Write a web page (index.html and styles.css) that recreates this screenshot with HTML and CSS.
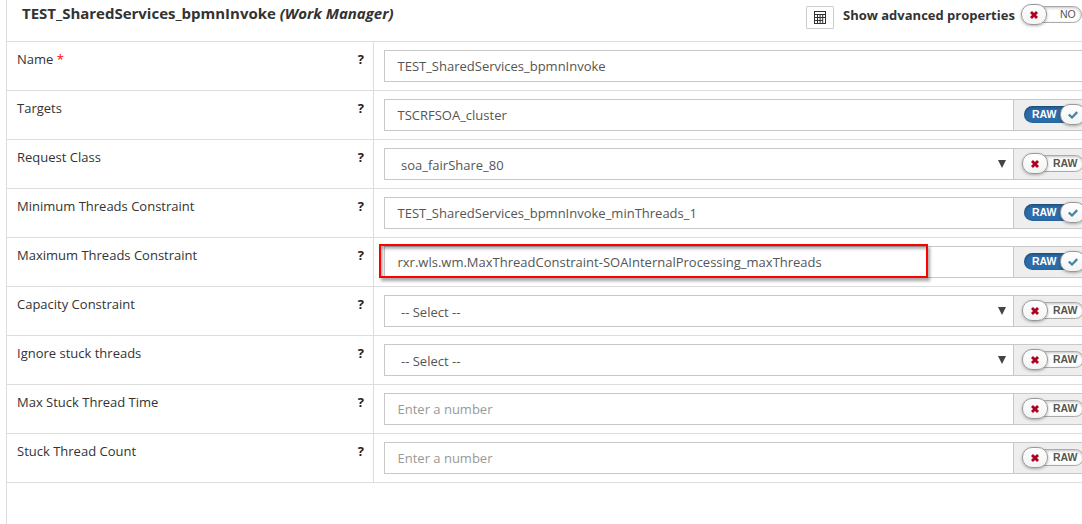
FILE: index.html
```
<!DOCTYPE html>
<html lang="en">
<head>
<meta charset="utf-8">
<title>Work Manager</title>
<link rel="stylesheet" href="styles.css">
</head>
<body>
<svg class="defs" width="0" height="0">
  <symbol id="cross" viewBox="0 0 8 8"><path d="M2 0L4 2L6 0L8 2L6 4L8 6L6 8L4 6L2 8L0 6L2 4L0 2Z"/></symbol>
  <symbol id="check" viewBox="0 0 10 8"><path d="M1.6 2.7L4 5L8.4 .3L10 1.9L4 8L0 4.3Z"/></symbol>
</svg>
<main class="panel">
  <header class="head">
    <h1 class="title">TEST_SharedServices_bpmnInvoke <em>(Work Manager)</em></h1>
    <button class="calc" aria-label="Calculator">
      <svg width="12" height="13" viewBox="0 0 12 13"><path fill="#333" fill-rule="evenodd" d="M0 0h12v13H0zM1 1v2h10V1zM1 4v2h2V4zM4 4v2h1.6V4zM6.6 4v2h1.6V4zM9.2 4v2H11V4zM1 7v2h2V7zM4 7v2h1.6V7zM6.6 7v2h1.6V7zM9.2 7v5H11V7zM1 10v2h2v-2zM4 10v2h1.6v-2zM6.6 10v2h1.6v-2z"/></svg>
    </button>
    <span class="adv">Show advanced properties</span>
    <span class="toggle off no"><span class="knob"><svg class="cross"><use href="#cross"/></svg></span><span class="track">NO</span></span>
  </header>
  <section class="rows">
    <div class="row"><div class="label"><span>Name <b class="req">*</b></span><b class="help">?</b></div><div class="cell"><div class="field">TEST_SharedServices_bpmnInvoke</div></div></div>
    <div class="row"><div class="label"><span>Targets</span><b class="help">?</b></div><div class="cell"><div class="field">TSCRFSOA_cluster</div><div class="addon"><span class="toggle on"><span class="track">RAW</span><span class="knob"><svg class="check"><use href="#check"/></svg></span></span></div></div></div>
    <div class="row"><div class="label"><span>Request Class</span><b class="help">?</b></div><div class="cell"><div class="field select">soa_fairShare_80<i class="arrow"></i></div><div class="addon"><span class="toggle off"><span class="knob"><svg class="cross"><use href="#cross"/></svg></span><span class="track">RAW</span></span></div></div></div>
    <div class="row"><div class="label"><span>Minimum Threads Constraint</span><b class="help">?</b></div><div class="cell"><div class="field">TEST_SharedServices_bpmnInvoke_minThreads_1</div><div class="addon"><span class="toggle on"><span class="track">RAW</span><span class="knob"><svg class="check"><use href="#check"/></svg></span></span></div></div></div>
    <div class="row"><div class="label"><span>Maximum Threads Constraint</span><b class="help">?</b></div><div class="cell"><div class="field">rxr.wls.wm.MaxThreadConstraint-SOAInternalProcessing_maxThreads</div><div class="addon"><span class="toggle on"><span class="track">RAW</span><span class="knob"><svg class="check"><use href="#check"/></svg></span></span></div><div class="highlight"></div></div></div>
    <div class="row"><div class="label"><span>Capacity Constraint</span><b class="help">?</b></div><div class="cell"><div class="field select">-- Select --<i class="arrow"></i></div><div class="addon"><span class="toggle off"><span class="knob"><svg class="cross"><use href="#cross"/></svg></span><span class="track">RAW</span></span></div></div></div>
    <div class="row"><div class="label"><span>Ignore stuck threads</span><b class="help">?</b></div><div class="cell"><div class="field select">-- Select --<i class="arrow"></i></div><div class="addon"><span class="toggle off"><span class="knob"><svg class="cross"><use href="#cross"/></svg></span><span class="track">RAW</span></span></div></div></div>
    <div class="row"><div class="label"><span>Max Stuck Thread Time</span><b class="help">?</b></div><div class="cell"><div class="field hint">Enter a number</div><div class="addon"><span class="toggle off"><span class="knob"><svg class="cross"><use href="#cross"/></svg></span><span class="track">RAW</span></span></div></div></div>
    <div class="row"><div class="label"><span>Stuck Thread Count</span><b class="help">?</b></div><div class="cell"><div class="field hint">Enter a number</div><div class="addon"><span class="toggle off"><span class="knob"><svg class="cross"><use href="#cross"/></svg></span><span class="track">RAW</span></span></div></div></div>
  </section>
</main>
</body>
</html>
```
FILE: styles.css
```
* { box-sizing: border-box; }
body {
  margin: 0;
  height: 524px;
  overflow: hidden;
  background: #fff;
  color: #333;
  font: 13px/18px "Open Sans", sans-serif;
}
.defs { position: absolute; }
.panel {
  width: 1110px;
  height: 524px;
  margin-left: 6px;
  border-left: 1px solid #ddd;
}
.head {
  display: flex;
  align-items: flex-start;
  height: 41px;
  padding-left: 15px;
}
.title {
  width: 784px;
  margin: 0;
  padding-top: 3px;
  font-size: 15px;
  line-height: 20px;
  font-weight: 700;
  letter-spacing: -.01px;
  white-space: nowrap;
}
.calc {
  display: flex;
  align-items: center;
  justify-content: center;
  width: 28px;
  height: 23px;
  margin-top: 6px;
  padding: 0;
  background: #fff;
  border: 1px solid #ccc;
  border-radius: 1px;
}
.adv {
  width: 178px;
  margin-left: 9px;
  padding-top: 6px;
  font-weight: 700;
  white-space: nowrap;
}
.row {
  display: flex;
  height: 49px;
  border-top: 1px solid #ddd;
}
.rows { border-bottom: 1px solid #ddd; }
.label {
  display: flex;
  justify-content: space-between;
  width: 367px;
  padding: 8px 9px 0 10px;
  border-right: 1px solid #ddd;
}
.req { color: #f00; font-weight: 400; }
.help { color: #222; }
.cell {
  position: relative;
  display: flex;
  flex: 1;
  padding: 8px 0 8px 10px;
}
.field {
  display: flex;
  align-items: center;
  flex: 1;
  height: 32px;
  padding-left: 12.5px;
  border: 1px solid #c8c8c8;
  color: #555;
  white-space: nowrap;
}
.select { justify-content: space-between; padding: 2px 7px 0 16px; }
.hint { color: #999; }
.arrow {
  width: 8px;
  height: 8px;
  margin-top: -2px;
  background: #444;
  clip-path: polygon(0 0, 100% 0, 50% 100%);
}
.addon {
  display: flex;
  align-items: center;
  width: 102px;
  height: 32px;
  padding: 0 0 1px 8px;
  background: #eee;
  border: 1px solid #c8c8c8;
  border-left: 0;
}
.toggle {
  display: flex;
  align-items: center;
  font: bold 10.5px/16px "Liberation Sans", sans-serif;
}
.knob {
  position: relative;
  display: flex;
  align-items: center;
  justify-content: center;
  width: 26px;
  height: 21px;
  border: 1px solid #999;
  border-radius: 10px;
  background: linear-gradient(#fff, #f3f3f3);
  box-shadow: 0 1px 3px rgba(0, 0, 0, .3);
}
.track { height: 17px; }
.off .track {
  width: 48px;
  margin-left: -12px;
  padding-left: 16px;
  border: 1px solid #aaa;
  border-radius: 9px;
  background: #fff;
  box-shadow: inset 0 1px 3px rgba(0, 0, 0, .25);
  line-height: 15px;
  color: #555;
}
.on { padding-left: 2px; }
.on .track {
  width: 50px;
  padding-left: 8px;
  border-radius: 9px;
  background: #2c6ca8;
  box-shadow: inset 0 1px 3px rgba(0, 0, 0, .4);
  color: #fff;
}
.on .knob { margin-left: -14px; }
.no { margin-top: 4px; }
.no .track { width: 47px; padding-left: 24px; font-weight: 400; }
.cross { width: 8px; height: 8px; fill: #b00020; }
.check { width: 10px; height: 8px; fill: #4482a6; }
.highlight {
  position: absolute;
  left: 5px;
  top: 6px;
  width: 549px;
  height: 34px;
  border: 2px solid #f00;
  box-shadow: 2px 3px 3px rgba(0, 0, 0, .35), inset 2px 3px 3px rgba(0, 0, 0, .3);
}
```
